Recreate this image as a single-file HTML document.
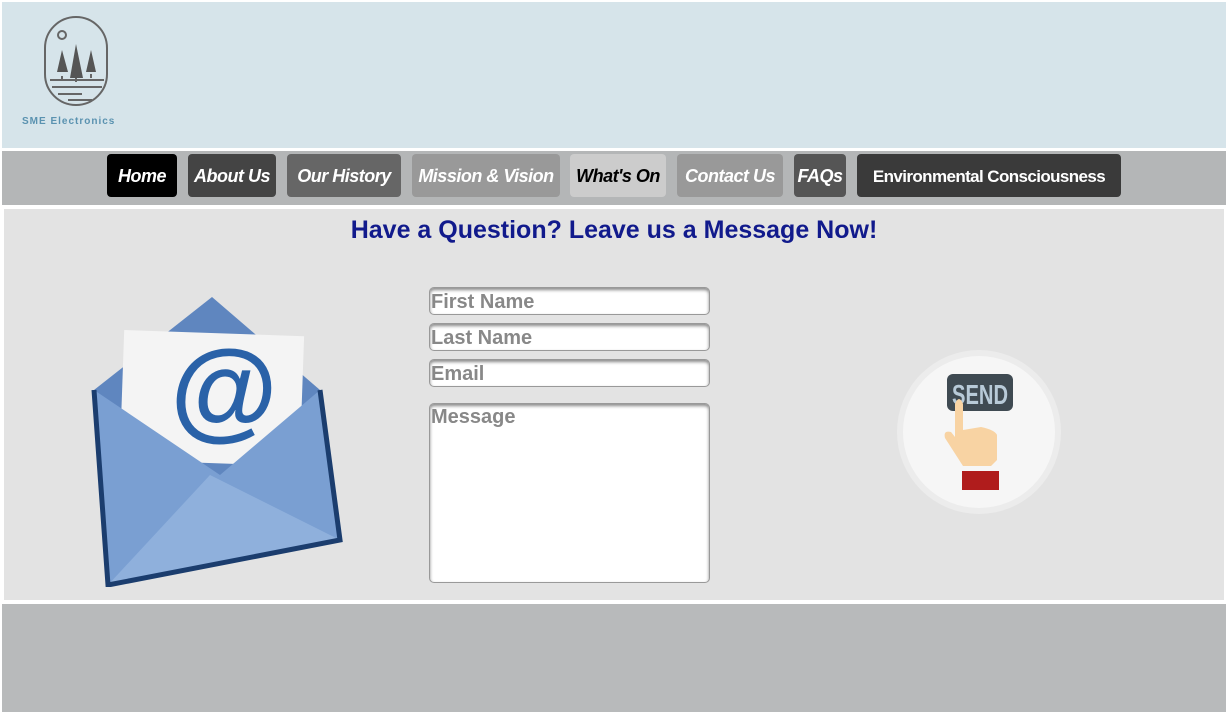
<!DOCTYPE html>
<html><head><style>
body{margin:0;width:1228px;height:715px;background:#fff;position:relative;overflow:hidden;font-family:"Liberation Sans",sans-serif}
.hdr{position:absolute;left:2px;top:2px;width:1224px;height:146px;background:#d6e4ea}
.nav{position:absolute;left:2px;top:151px;width:1224px;height:54px;background:#b4b6b7}
.main{position:absolute;left:4px;top:209px;width:1220px;height:391px;background:#e3e3e3}
.foot{position:absolute;left:2px;top:604px;width:1224px;height:108px;background:#b8babb}
.b{position:absolute;top:154px;height:43px;border-radius:4px;color:#fff;font-weight:bold;font-style:italic;font-size:18px;line-height:45px;text-align:center;white-space:nowrap;letter-spacing:-0.5px;overflow:hidden}
h1{position:absolute;left:0;width:1228px;top:216px;margin:0;text-align:center;color:#111a8c;font-size:25px;font-weight:bold}
.in{position:absolute;left:429px;width:281px;height:28px;background:#fff;border:1px solid #999;border-radius:5px;box-shadow:inset 0 2px 3px #888;color:#888;font-weight:bold;font-size:20px;line-height:28px;box-sizing:border-box;padding-left:1px}
</style></head><body>
<div class="hdr"></div>
<svg style="position:absolute;left:40px;top:14px" width="75" height="95" viewBox="0 0 75 95" fill="none" stroke="#666" stroke-width="2">
<rect x="5" y="3" width="62" height="88" rx="31"/>
<circle cx="22" cy="21" r="4"/>
<polygon points="22,36 28,58 17,58" fill="#555" stroke="none"/>
<polygon points="36,30 43,64 30,64" fill="#555" stroke="none"/>
<polygon points="51,36 56,58 46,58" fill="#555" stroke="none"/>
<path d="M10 66 H64 M12 73 H62 M18 80 H42 M28 86 H52 M22 62v4 M36 64v4 M51 60v4"/>
</svg>
<div style="position:absolute;left:22px;top:116px;font-size:10px;font-weight:bold;color:#5a92b0;letter-spacing:1px">SME Electronics</div>
<div class="nav"></div>
<div class="b" style="left:107px;width:70px;background:#000">Home</div>
<div class="b" style="left:188px;width:88px;background:#444">About Us</div>
<div class="b" style="left:287px;width:114px;background:#666">Our History</div>
<div class="b" style="left:412px;width:148px;background:#999">Mission &amp; Vision</div>
<div class="b" style="left:570px;width:96px;background:#ccc;color:#000">What's On</div>
<div class="b" style="left:677px;width:106px;background:#999">Contact Us</div>
<div class="b" style="left:794px;width:52px;background:#555">FAQs</div>
<div class="b" style="left:857px;width:264px;background:#3a3a3a;font-style:normal;font-size:17px;letter-spacing:-0.6px">Environmental Consciousness</div>
<div class="main"></div>
<h1>Have a Question? Leave us a Message Now!</h1>
<svg style="position:absolute;left:90px;top:295px" width="256" height="292" viewBox="0 0 256 292">
<polygon points="4,95 122,2 230,95 250,245 18,290" fill="#5f86bf"/>
<rect x="32" y="38" width="180" height="130" fill="#f4f4f4" transform="rotate(2 120 100)"/>
<text x="134" y="132" text-anchor="middle" font-family="Liberation Sans,sans-serif" font-weight="bold" font-size="110" fill="#2a62a8">@</text>
<polygon points="4,95 130,180 230,95 250,245 18,290" fill="#7a9fd2"/>
<polygon points="18,290 120,180 250,245" fill="#8fb0dc"/>
<path d="M4 95 L18 290 L250 245 L230 95" fill="none" stroke="#1b3d6e" stroke-width="5"/>
</svg>
<div class="in" style="top:287px">First Name</div>
<div class="in" style="top:323px">Last Name</div>
<div class="in" style="top:359px">Email</div>
<div class="in" style="top:403px;height:180px;line-height:26px">Message</div>
<svg style="position:absolute;left:895px;top:348px" width="168" height="168" viewBox="0 0 168 168">
<circle cx="84" cy="84" r="82" fill="#ececec"/>
<circle cx="84" cy="84" r="76" fill="#f6f6f6"/>
<rect x="52" y="26" width="66" height="37" rx="6" fill="#3f4a52"/>
<text x="57" y="56" textLength="56" lengthAdjust="spacingAndGlyphs" font-family="Liberation Sans,sans-serif" font-weight="bold" font-size="28" fill="#b8cad8">SEND</text>
<path d="M60 56 q4-10 8 0 v26 l18-3 q14 3 16 8 v25 l-6 6 h-28 l-18-28 q-2-8 6-6 l4 5z" fill="#f8d3a3"/>
<rect x="67" y="123" width="37" height="19" fill="#b01c1c"/>
</svg>
<div class="foot"></div>
</body></html>
